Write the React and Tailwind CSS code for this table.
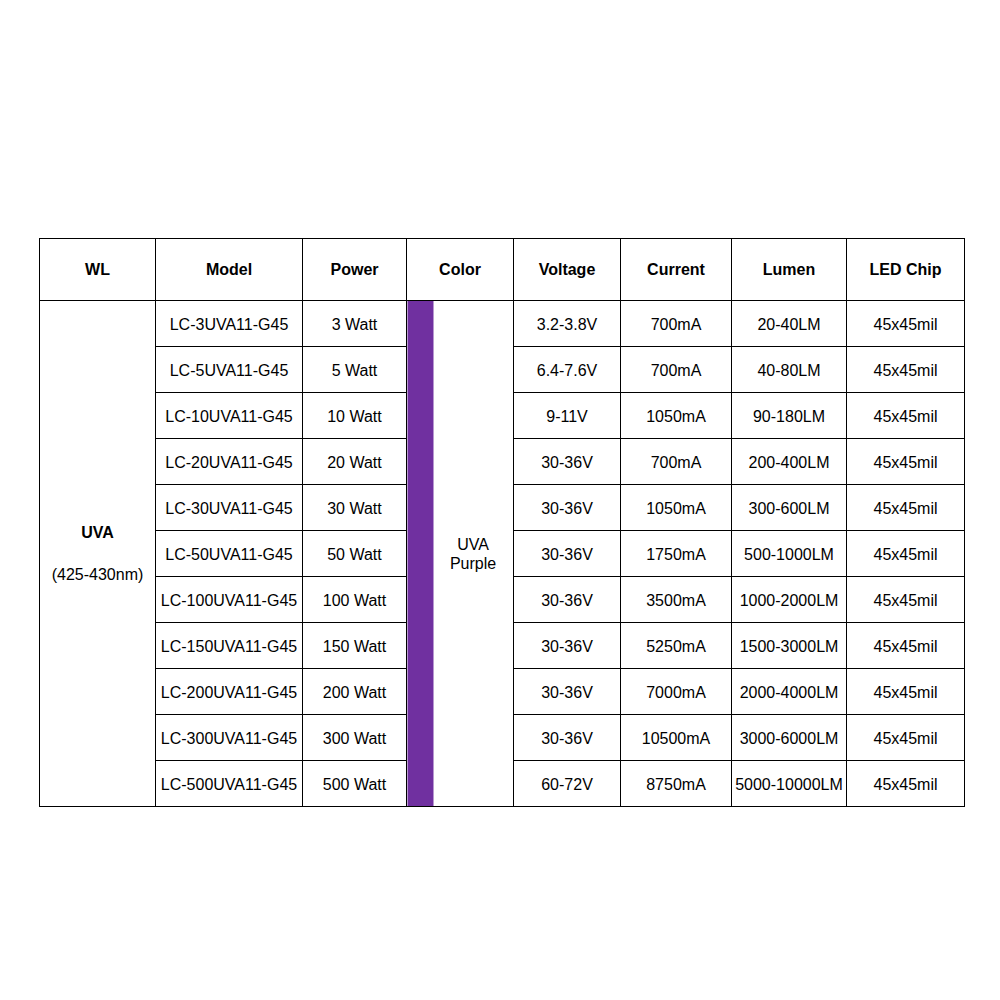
const ROWS = [
  ['LC-3UVA11-G45', '3 Watt', '3.2-3.8V', '700mA', '20-40LM'],
  ['LC-5UVA11-G45', '5 Watt', '6.4-7.6V', '700mA', '40-80LM'],
  ['LC-10UVA11-G45', '10 Watt', '9-11V', '1050mA', '90-180LM'],
  ['LC-20UVA11-G45', '20 Watt', '30-36V', '700mA', '200-400LM'],
  ['LC-30UVA11-G45', '30 Watt', '30-36V', '1050mA', '300-600LM'],
  ['LC-50UVA11-G45', '50 Watt', '30-36V', '1750mA', '500-1000LM'],
  ['LC-100UVA11-G45', '100 Watt', '30-36V', '3500mA', '1000-2000LM'],
  ['LC-150UVA11-G45', '150 Watt', '30-36V', '5250mA', '1500-3000LM'],
  ['LC-200UVA11-G45', '200 Watt', '30-36V', '7000mA', '2000-4000LM'],
  ['LC-300UVA11-G45', '300 Watt', '30-36V', '10500mA', '3000-6000LM'],
  ['LC-500UVA11-G45', '500 Watt', '60-72V', '8750mA', '5000-10000LM'],
]

const HEADERS = ['WL', 'Model', 'Power', 'Color', 'Voltage', 'Current', 'Lumen', 'LED Chip']

export default function App() {
  return (
    <div className="min-h-screen bg-white pt-[238px] pl-[39px] font-['Liberation_Sans',Arial,sans-serif] text-[16px] text-black">
      <table className="table-fixed border-collapse w-[925px]">
        <colgroup>
          <col className="w-[116px]" />
          <col className="w-[147px]" />
          <col className="w-[104px]" />
          <col className="w-[107px]" />
          <col className="w-[107px]" />
          <col className="w-[111px]" />
          <col className="w-[115px]" />
          <col className="w-[118px]" />
        </colgroup>
        <thead>
          <tr className="h-[62px]">
            {HEADERS.map((h) => (
              <th key={h} className="border border-black font-bold text-center align-middle p-0">
                {h}
              </th>
            ))}
          </tr>
        </thead>
        <tbody>
          {ROWS.map((r, i) => (
            <tr key={r[0]} className="h-[46px]">
              {i === 0 && (
                <td rowSpan={11} className="border border-black text-center align-middle p-0 leading-[21px]">
                  <div className="font-bold">UVA</div>
                  <div>&nbsp;</div>
                  <div>(425-430nm)</div>
                </td>
              )}
              <td className="border border-black text-center align-middle p-0 pt-[2px] whitespace-nowrap">{r[0]}</td>
              <td className="border border-black text-center align-middle p-0 pt-[2px]">{r[1]}</td>
              {i === 0 && (
                <td
                  rowSpan={11}
                  className="border border-black text-center align-middle p-0 pl-[26px] leading-[19px] bg-[linear-gradient(to_right,#7030a0_26px,#ffffff_26px)]"
                >
                  UVA
                  <br />
                  Purple
                </td>
              )}
              <td className="border border-black text-center align-middle p-0 pt-[2px]">{r[2]}</td>
              <td className="border border-black text-center align-middle p-0 pt-[2px]">{r[3]}</td>
              <td className="border border-black text-center align-middle p-0 pt-[2px] whitespace-nowrap">{r[4]}</td>
              <td className="border border-black text-center align-middle p-0 pt-[2px]">45x45mil</td>
            </tr>
          ))}
        </tbody>
      </table>
    </div>
  )
}
